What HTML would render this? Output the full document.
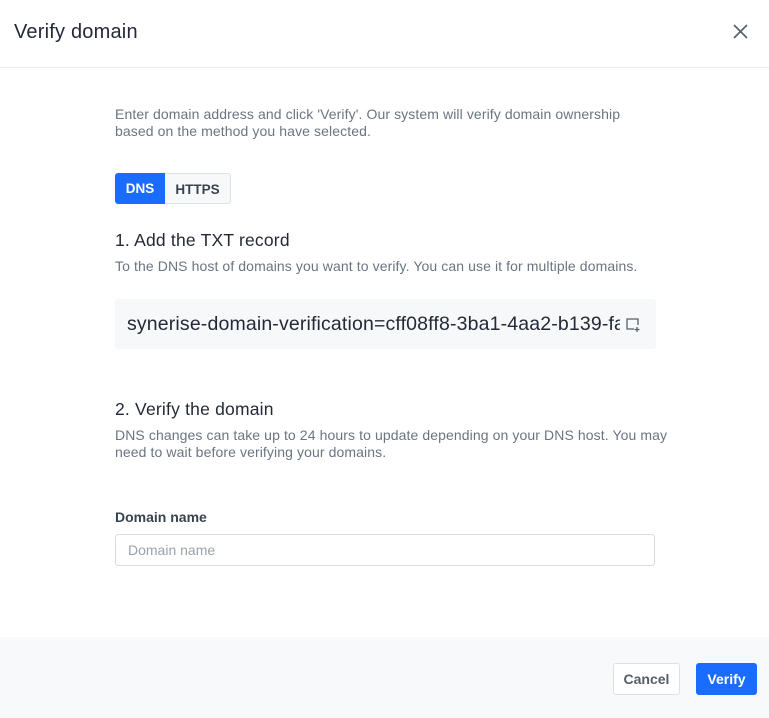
<!DOCTYPE html>
<html><head><style>
*{box-sizing:border-box;margin:0;padding:0}
body{width:769px;height:718px;background:#fff;font-family:"Liberation Sans",sans-serif;color:#384350;position:relative;overflow:hidden}
.hdr{height:68px;border-bottom:1px solid #e9edee;position:relative}
.hdr h1{position:absolute;left:14px;top:21px;font-size:20px;font-weight:normal;color:#232936;letter-spacing:0.2px}
.x{position:absolute;left:733px;top:24px}
.c{position:absolute;left:115px;width:540px}
p{font-size:14px;line-height:17px;color:#6a7580;letter-spacing:0.1px}
h2{font-size:17.5px;font-weight:normal;color:#232936;letter-spacing:0.2px}
.tabs{position:absolute;left:115px;top:173px;display:flex}
.tabs div{height:31px;line-height:31px;font-size:13.5px;font-weight:bold;padding:0 12px}
.code{position:absolute;left:115px;top:299px;width:541px;height:50px;background:#f7f8f9;border-radius:3px;font-size:19.5px;line-height:50px;padding-left:12px;color:#232936;overflow:hidden;white-space:nowrap;letter-spacing:0.15px}
.inp{position:absolute;left:115px;top:534px;width:540px;height:32px;border:1px solid #d7dce0;border-radius:3px;font-size:14px;color:#9aa3ab;line-height:30px;padding-left:12px}
.ft{position:absolute;left:0;top:637px;width:769px;height:81px;background:#f8f9fa}
.btn{position:absolute;top:663px;height:32px;line-height:30px;font-size:14px;font-weight:bold;border-radius:3px;text-align:center}
</style></head><body>
<div class="hdr"><h1>Verify domain</h1>
<svg class="x" width="15" height="15" viewBox="0 0 15 15"><path d="M1 1L14 14M14 1L1 14" stroke="#555e68" stroke-width="1.6"/></svg></div>
<p class="c" style="top:106px">Enter domain address and click 'Verify'. Our system will verify domain ownership based on the method you have selected.</p>
<div class="tabs"><div style="background:#1a6cff;color:#fff;border-radius:3px 0 0 3px;width:50px;padding:0;text-align:center">DNS</div><div style="border:1px solid #dde1e4;border-left:none;background:#f7f8f9;color:#384350;border-radius:0 3px 3px 0;width:66px;padding:0;text-align:center">HTTPS</div></div>
<h2 class="c" style="top:230px">1. Add the TXT record</h2>
<p class="c" style="top:258px;width:560px">To the DNS host of domains you want to verify. You can use it for multiple domains.</p>
<div class="code">synerise-domain-verification=cff08ff8-3ba1-4aa2-b139-fa</div>
<div style="position:absolute;left:620px;top:300px;width:35px;height:48px;background:#f7f8f9"></div>
<svg style="position:absolute;left:625px;top:317px" width="16" height="16" viewBox="0 0 16 16"><path d="M9 12H2V2h11v6M12 10v5M9.5 12.5h5" stroke="#555e68" stroke-width="1.3" fill="none"/></svg>
<h2 class="c" style="top:399px">2. Verify the domain</h2>
<p class="c" style="top:427px;width:560px">DNS changes can take up to 24 hours to update depending on your DNS host. You may<br>need to wait before verifying your domains.</p>
<div class="c" style="top:509px;font-size:14px;font-weight:bold;color:#384350">Domain name</div>
<div class="inp">Domain name</div>
<div class="ft"></div>
<div class="btn" style="left:613px;width:67px;border:1px solid #dde1e4;background:#fff;color:#555e68">Cancel</div>
<div class="btn" style="left:696px;width:61px;background:#1a6cff;color:#fff;line-height:32px">Verify</div>
</body></html>
